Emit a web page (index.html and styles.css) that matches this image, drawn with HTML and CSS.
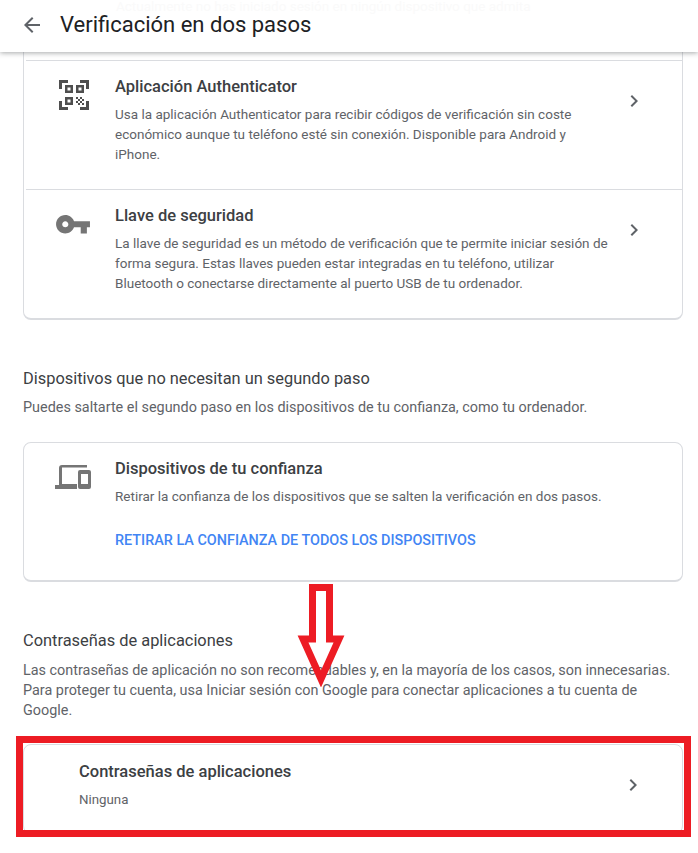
FILE: index.html
```html
<!DOCTYPE html>
<html lang="es">
<head>
<meta charset="utf-8">
<title>Verificación en dos pasos</title>
<link rel="stylesheet" href="styles.css">
</head>
<body>
<div class="page">
  <header class="topbar">
    <div class="ghost">Actualmente no has iniciado sesión en ningún dispositivo que admita</div>
    <svg class="back" width="24" height="24" viewBox="0 0 24 24"><path d="M20 11H7.83l5.59-5.59L12 4l-8 8 8 8 1.41-1.41L7.83 13H20z"/></svg>
    <h1 class="page-title">Verificación en dos pasos</h1>
  </header>
  <main class="content">
    <section class="card card-top">
      <div class="row row-first">
        <div class="icon-cell">
          <svg width="30" height="30" viewBox="0 0 30 30"><path class="solid" d="M0 0h9v3H3v6H0zM21 0h9v9h-3V3h-6zM0 21h3v6h6v3H0zM27 21h3v9h-9v-3h6z"/><path class="solid" fill-rule="evenodd" d="M6 5h8v8H6zM8.500 7.500v3h3v-3zM17 5h8v8h-8zM19.500 7.500v3h3v-3zM6 17h8v8H6zM8.500 19.500v3h3v-3z"/><path class="solid" d="M17 17h2v2h-2zM21 17h2v2h-2zM19 19h2v2h-2zM23 19h2v2h-2zM17 21h2v2h-2zM21 21h2v2h-2zM19 23h2v2h-2zM23 23h2v2h-2z"/></svg>
        </div>
        <div class="text-cell">
          <h3 class="item-title">Aplicación Authenticator</h3>
          <p class="item-desc">Usa la aplicación Authenticator para recibir códigos de verificación sin coste económico aunque tu teléfono esté sin conexión. Disponible para Android y iPhone.</p>
        </div>
        <svg class="chev" width="24" height="24" viewBox="0 0 24 24"><path d="M8.590 16.590 13.170 12 8.590 7.410 10 6l6 6-6 6z"/></svg>
      </div>
      <div class="row">
        <div class="icon-cell">
          <svg class="key" width="34" height="18.500" viewBox="1 6 22 12"><path d="M12.650 10C11.830 7.670 9.610 6 7 6c-3.310 0-6 2.690-6 6s2.690 6 6 6c2.610 0 4.830-1.670 5.650-4H17v4h4v-4h2v-4H12.650zM7 14c-1.100 0-2-.9-2-2s.9-2 2-2 2 .9 2 2-.9 2-2 2z"/></svg>
        </div>
        <div class="text-cell">
          <h3 class="item-title">Llave de seguridad</h3>
          <p class="item-desc">La llave de seguridad es un método de verificación que te permite iniciar sesión de forma segura. Estas llaves pueden estar integradas en tu teléfono, utilizar Bluetooth o conectarse directamente al puerto USB de tu ordenador.</p>
        </div>
        <svg class="chev" width="24" height="24" viewBox="0 0 24 24"><path d="M8.590 16.590 13.170 12 8.590 7.410 10 6l6 6-6 6z"/></svg>
      </div>
    </section>

    <section class="block block-devices">
      <h2 class="block-title">Dispositivos que no necesitan un segundo paso</h2>
      <p class="block-desc">Puedes saltarte el segundo paso en los dispositivos de tu confianza, como tu ordenador.</p>
    </section>

    <section class="card card-devices">
      <div class="row row-devices">
        <div class="icon-cell">
          <svg class="devices" width="36" height="24" viewBox="0 0 36 24"><path d="M4 3a3 3 0 0 1 3-3h25v2.500H7V19h15v5H0v-4h4z"/><path fill-rule="evenodd" d="M25 5h9a2 2 0 0 1 2 2v15a2 2 0 0 1-2 2h-9a2 2 0 0 1-2-2V7a2 2 0 0 1 2-2zm1 4v10h7V9z"/></svg>
        </div>
        <div class="text-cell">
          <h3 class="item-title">Dispositivos de tu confianza</h3>
          <p class="item-desc item-desc-one">Retirar la confianza de los dispositivos que se salten la verificación en dos pasos.</p>
          <a class="item-link" href="#">RETIRAR LA CONFIANZA DE TODOS LOS DISPOSITIVOS</a>
        </div>
      </div>
    </section>

    <section class="block block-apps">
      <h2 class="block-title">Contraseñas de aplicaciones</h2>
      <p class="block-desc block-desc-wide">Las contraseñas de aplicación no son recomendables y, en la mayoría de los casos, son innecesarias. Para proteger tu cuenta, usa Iniciar sesión con Google para conectar aplicaciones a tu cuenta de Google.</p>
    </section>

    <section class="card card-apps">
      <div class="row row-apps">
        <div class="text-cell">
          <h3 class="item-title">Contraseñas de aplicaciones</h3>
          <p class="item-desc item-desc-none">Ninguna</p>
        </div>
        <svg class="chev" width="24" height="24" viewBox="0 0 24 24"><path d="M8.590 16.590 13.170 12 8.590 7.410 10 6l6 6-6 6z"/></svg>
      </div>
    </section>
  </main>

  <svg class="mark-arrow" width="48" height="103" viewBox="0 0 48 103"><path d="M15.500 3.500h17V55h9.500L24 95 6 55h9.500z"/></svg>
  <div class="mark-box"></div>
</div>
</body>
</html>
```
FILE: styles.css
```css
* { box-sizing: border-box; }
html, body { margin: 0; padding: 0; background: #fff; }
body { font-family: Roboto, "Liberation Sans", sans-serif; color: #3c4043; }
.page { position: relative; width: 698px; height: 853px; overflow: hidden; }

.topbar {
  position: relative;
  display: flex;
  align-items: center;
  height: 52px;
  padding: 0 0 2px 20px;
  background: #fff;
  box-shadow: 0 1px 5px rgba(60, 64, 67, .45);
  z-index: 2;
}
.ghost {
  position: absolute;
  left: 116px;
  top: 0;
  font-size: 13.500px;
  line-height: 13px;
  color: #fafafa;
  white-space: nowrap;
}
.back { fill: #5f6368; flex: none; }
.page-title { margin: 0 0 0 16px; font-size: 22px; font-weight: 400; line-height: 28px; color: #202124; }

.content { padding: 0 15px 0 23px; }
.card { border: 1px solid #dadce0; border-radius: 8px; background: #fff; }
.card-top { border-top: 0; border-radius: 0 0 8px 8px; padding-top: 8px; border-bottom-width: 2px; }
.card-devices { margin-top: 24px; height: 140px; border-bottom-width: 2px; }
.card-apps { margin-top: 23px; height: 90px; }

.row {
  display: flex;
  align-items: flex-start;
  margin-left: 2px;
  border-top: 1px solid #dadce0;
  padding: 14px 0 25px;
  position: relative;
}
.icon-cell { flex: none; width: 89px; display: flex; justify-content: center; padding: 5px 0 0 4px; }
.text-cell { flex: none; width: 495px; }
.item-title { margin: 0; font-size: 16.500px; font-weight: 500; line-height: 24px; color: #3c4043; }
.item-desc { margin: 5px 0 0; font-size: 13.500px; line-height: 20px; color: #5f6368; }
.chev { flex: none; margin: 14px 0 0 12px; fill: #5f6368; }

.solid { fill: #4f4f4f; }
.key { fill: #757575; margin-top: 6px; }
.devices { fill: #757575; margin-top: 8px; }

.row-first .icon-cell { padding: 5px 0 0 6px; }

.row-devices { border-top: 0; margin-left: 0; padding: 14px 0 0; }
.row-devices .icon-cell { width: 91px; padding: 0 0 0 6px; }
.item-desc-one { margin-top: 5px; }
.item-link {
  display: block;
  margin-top: 25px;
  font-size: 14.400px;
  font-weight: 500;
  line-height: 20px;
  color: #4285f4;
  text-decoration: none;
}

.row-apps { border-top: 0; margin-left: 0; padding: 15px 0 0 55px; }
.row-apps .text-cell { width: 540px; }
.row-apps .chev { margin-top: 13px; margin-left: 2px; }
.item-desc-none { margin-top: 6px; font-size: 13.300px; }

.block-devices { margin-top: 47px; }
.block-apps { margin-top: 47px; }
.block-title { margin: 0; font-size: 16.400px; font-weight: 400; line-height: 24px; color: #3c4043; }
.block-desc { margin: 7px 0 0; font-size: 14.400px; line-height: 20px; color: #5f6368; }
.block-desc-wide { margin-top: 8px; }

.mark-box {
  position: absolute;
  left: 16px;
  top: 736px;
  width: 675px;
  height: 101px;
  border: 7px solid #ed1c24;
  z-index: 3;
}
.mark-arrow {
  position: absolute;
  left: 297px;
  top: 584px;
  fill: none;
  stroke: #ed1c24;
  stroke-width: 7;
  z-index: 3;
}
```
